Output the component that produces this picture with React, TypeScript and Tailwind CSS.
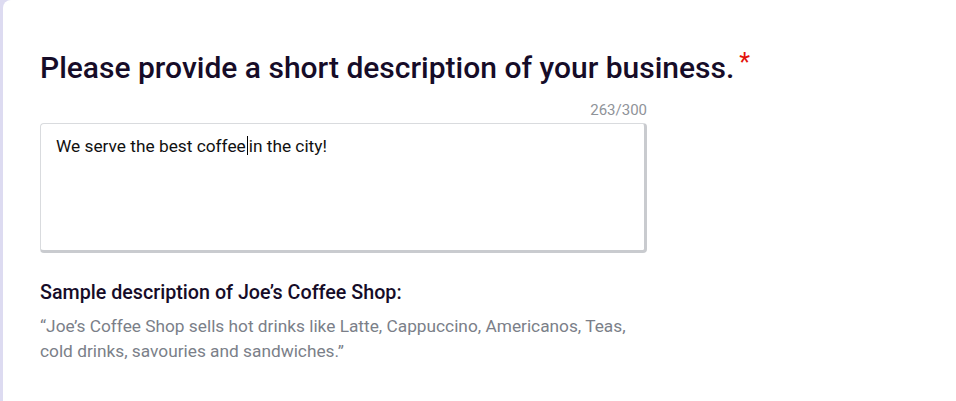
const App = () => {
  return (
    <div
      className="min-h-[401px] w-full bg-[#dddbf1] pl-[3px]"
      style={{ fontFamily: "Roboto, 'Liberation Sans', sans-serif" }}
    >
      <div className="min-h-[401px] rounded-tl-lg bg-white pl-[37px] pt-[50px]">
        <div className="flex items-start">
          <h1 className="text-[30px] font-medium leading-9 text-[#160c28]">
            Please provide a short description of your business.
          </h1>
          <span className="ml-[5px] mt-[-3px] text-[25px] leading-8 text-[#e3120b]">*</span>
        </div>

        <div className="mt-[14px] w-[607px]">
          <div className="text-right text-[15px] leading-5 text-[#8f9399]">263/300</div>
          <div className="mt-[3px] h-[130px] rounded border border-[#d9dbde] border-b-[3px] border-r-[3px] border-b-[#c9cbcf] border-r-[#c9cbcf] px-[15px] pt-[9px]">
            <p className="text-[17.3px] leading-6 text-[#111111]">
              We serve the best coffee
              <span className="mx-[1px] inline-block h-[19px] w-[1px] translate-y-[3px] bg-black"></span>
              in the city!
            </p>
          </div>

          <h2 className="mt-[26px] text-[19.7px] font-medium leading-7 text-[#160c28]">
            Sample description of Joe’s Coffee Shop:
          </h2>
          <p className="mt-[7px] text-[17.3px] leading-[25px] text-[#7b7f89]">
            “Joe’s Coffee Shop sells hot drinks like Latte, Cappuccino, Americanos, Teas, cold drinks,
            savouries and sandwiches.”
          </p>
        </div>
      </div>
    </div>
  );
};

export default App;
